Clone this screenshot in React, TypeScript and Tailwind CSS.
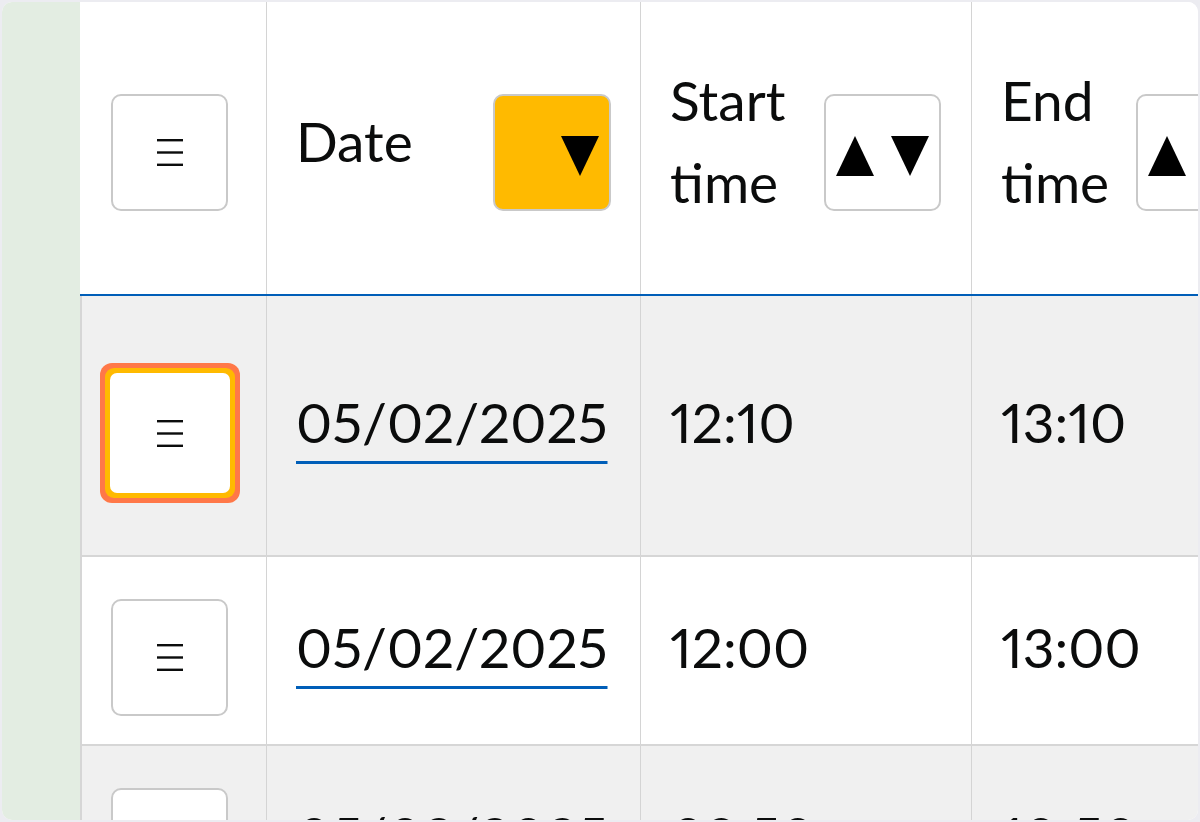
import React from 'react';

const font = { fontFamily: 'Lato, "Open Sans", sans-serif' };

const MenuIcon = () => (
  <svg width="26" height="27" viewBox="0 0 26 27" aria-hidden="true">
    <rect x="0" y="0" width="26" height="2.4" fill="#0b0c0c" />
    <rect x="0" y="12.3" width="26" height="2.4" fill="#0b0c0c" />
    <rect x="0" y="24.6" width="26" height="2.4" fill="#0b0c0c" />
  </svg>
);

const SortArrows = ({ up = true, down = true }: { up?: boolean; down?: boolean }) => (
  <svg width="93" height="40" viewBox="0 0 93 40" aria-hidden="true">
    <polygon points="0,40 19,0 38,40" fill={up ? '#000' : 'transparent'} />
    <polygon points="55,0 93,0 74,40" fill={down ? '#000' : 'transparent'} />
  </svg>
);

const MenuButton = () => (
  <button className="w-[117px] h-[117px] rounded-[10px] border-2 border-[#c9c9c9] bg-white flex items-center justify-center mt-[13px]">
    <MenuIcon />
  </button>
);

const FocusedMenuButton = () => (
  <div className="w-[140px] h-[140px] rounded-[12px] bg-[#ff7848] p-[5px] mt-[15px]">
    <div className="w-full h-full rounded-[9px] bg-[#ffba00] p-[5px]">
      <button className="w-full h-full rounded-[7px] bg-white flex items-center justify-center">
        <MenuIcon />
      </button>
    </div>
  </div>
);

const SortButton = ({ active = false, up = true }: { active?: boolean; up?: boolean }) => (
  <button
    className={
      active
        ? 'shrink-0 w-[118px] h-[117px] rounded-[10px] border-2 border-[#c9c9c9] bg-[#ffba00] flex items-center justify-center pt-[6px] mt-[9px]'
        : 'shrink-0 w-[117px] h-[117px] rounded-[10px] border-2 border-[#c9c9c9] bg-white flex items-center justify-center pt-[6px] mt-[9px]'
    }
  >
    <SortArrows up={up} />
  </button>
);

type Row = { date: string; start: string; end: string; focused?: boolean; shaded?: boolean };

const rows: Row[] = [
  { date: '05/02/2025', start: '12:10', end: '13:10', focused: true, shaded: true },
  { date: '05/02/2025', start: '12:00', end: '13:00' },
  { date: '05/02/2025', start: '09:50', end: '10:50', shaded: true },
];

const rowHeights = ['h-[261px]', 'h-[189px]', 'h-[189px]'];

export default function App() {
  return (
    <div className="h-screen bg-[#ececf1] p-[2px]" style={font}>
      <div className="h-full rounded-[10px] overflow-hidden bg-white flex text-[55px] leading-[1.5] text-[#0b0c0c] proportional-nums">
        {/* side strip */}
        <div className="w-[78px] shrink-0 bg-[#e3ede2]" />

        {/* table */}
        <div className="flex-1 min-w-0 overflow-hidden">
          {/* header */}
          <div className="grid grid-cols-[187px_374px_331px_400px] h-[294px] border-b-2 border-[#005eb8] bg-white">
            <div className="border-l-2 border-l-white border-r border-r-[#d4d4d4] flex items-center pl-[29px]">
              <button className="w-[117px] h-[117px] rounded-[10px] border-2 border-[#c9c9c9] bg-white flex items-center justify-center mt-[9px]">
                <MenuIcon />
              </button>
            </div>
            <div className="border-r border-[#d4d4d4] flex items-center justify-between pl-[29px] pr-[29px]">
              <span className="mb-[14px]">Date</span>
              <SortButton active up={false} />
            </div>
            <div className="border-r border-[#d4d4d4] flex items-center justify-between pl-[29px] pr-[30px]">
              <span className="mb-[14px] w-[130px]">Start time</span>
              <SortButton />
            </div>
            <div className="flex items-center gap-[30px] pl-[29px]">
              <span className="mb-[14px] w-[105px]">End time</span>
              <SortButton />
            </div>
          </div>

          {/* body */}
          {rows.map((r, i) => (
            <div
              key={i}
              className={`grid grid-cols-[187px_374px_331px_400px] ${rowHeights[i]} border-b-2 border-[#d6d6d6] ${
                r.shaded ? 'bg-[#f0f0f0]' : 'bg-white'
              }`}
            >
              <div
                className={`border-l-2 border-l-[#d6d6d6] border-r border-r-[#d4d4d4] flex items-center ${
                  r.focused ? 'pl-[18px]' : 'pl-[29px]'
                }`}
              >
                {r.focused ? <FocusedMenuButton /> : <MenuButton />}
              </div>
              <div className="border-r border-[#d4d4d4] flex items-center pl-[29px]">
                <a
                  href="#"
                  className="mb-[6px] underline decoration-[#005eb8] decoration-[3px] underline-offset-[18px]"
                >
                  {r.date}
                </a>
              </div>
              <div className="border-r border-[#d4d4d4] flex items-center pl-[29px]">
                <span className="mb-[6px]">{r.start}</span>
              </div>
              <div className="flex items-center pl-[29px]">
                <span className="mb-[6px]">{r.end}</span>
              </div>
            </div>
          ))}
        </div>
      </div>
    </div>
  );
}
